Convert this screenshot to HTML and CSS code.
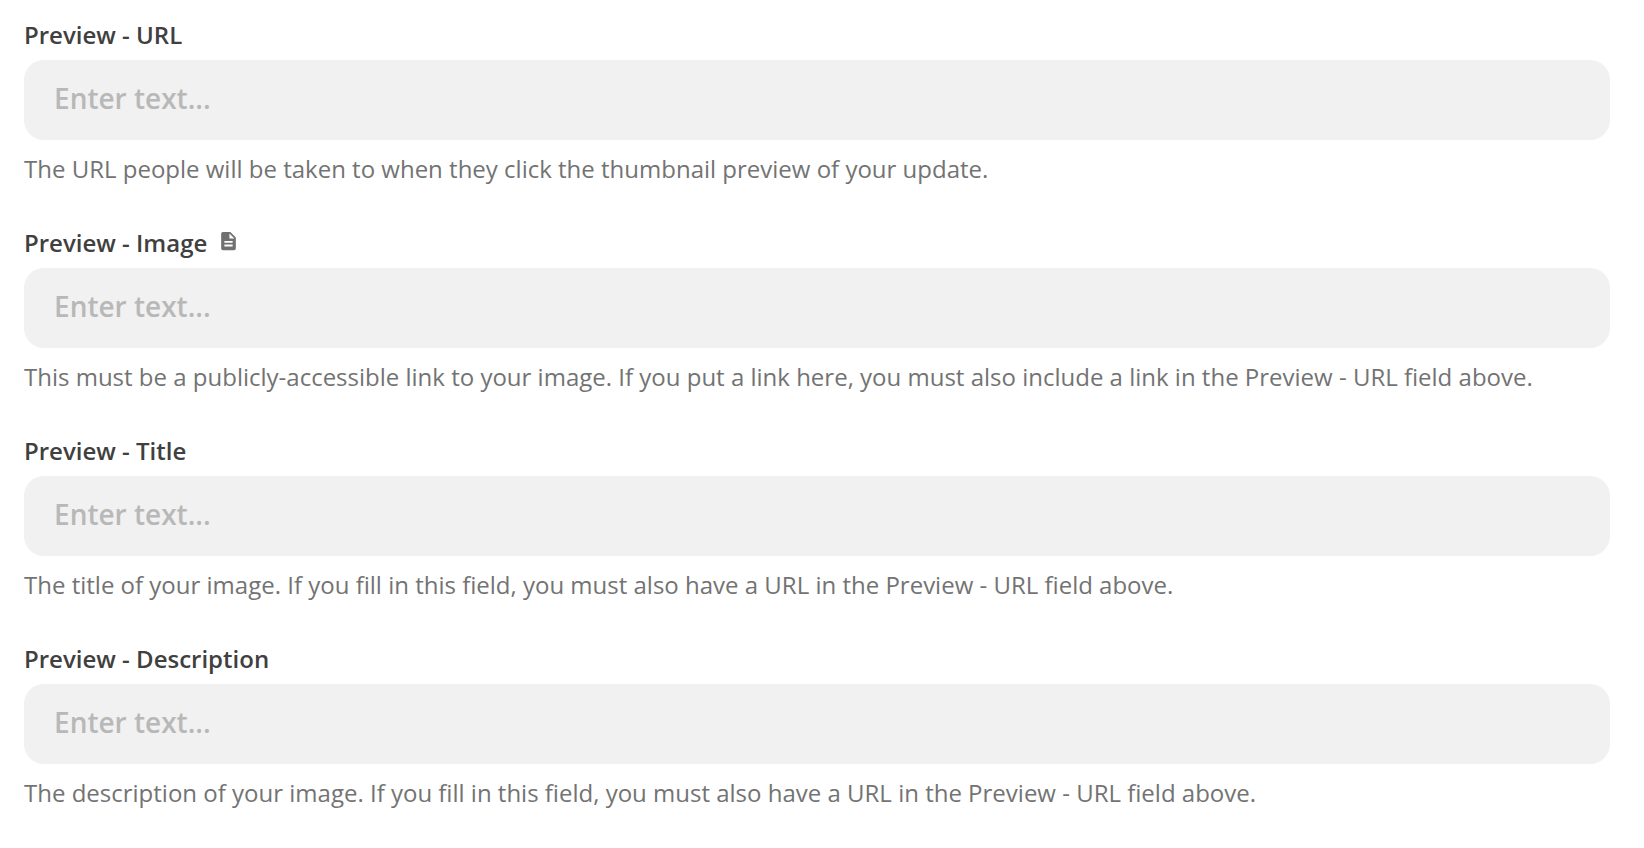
FILE: index.html
```html
<!DOCTYPE html>
<html lang="en">
<head>
    <meta charset="UTF-8">
    <meta name="viewport" content="width=device-width, initial-scale=1.0">
    <title>Preview fields</title>
    <link rel="stylesheet" href="styles.css">
</head>
<body>
    <form class="fields">
        <div class="field">
            <label for="preview-url">Preview - URL</label>
            <input type="text" id="preview-url" placeholder="Enter text..." aria-describedby="url-help">
            <p class="help" id="url-help">The URL people will be taken to when they click the thumbnail preview of your update.</p>
        </div>
        <div class="field">
            <label for="preview-image">Preview - Image
                <svg class="file-icon" viewBox="0 0 16 24" aria-hidden="true">
                    <path fill-rule="evenodd" d="M2 0h8l6 6v12a2 2 0 0 1-2 2H2a2 2 0 0 1-2-2V2a2 2 0 0 1 2-2zM9 1.500V7h5.500zM3.500 9.700v2h9v-2zM3.500 13.700v2h9v-2z"/>
                </svg>
            </label>
            <input type="text" id="preview-image" placeholder="Enter text..." aria-describedby="image-help">
            <p class="help" id="image-help">This must be a publicly-accessible link to your image. If you put a link here, you must also include a link in the Preview - URL field above.</p>
        </div>
        <div class="field">
            <label for="preview-title">Preview - Title</label>
            <input type="text" id="preview-title" placeholder="Enter text..." aria-describedby="title-help">
            <p class="help" id="title-help">The title of your image. If you fill in this field, you must also have a URL in the Preview - URL field above.</p>
        </div>
        <div class="field">
            <label for="preview-description">Preview - Description</label>
            <input type="text" id="preview-description" placeholder="Enter text..." aria-describedby="description-help">
            <p class="help" id="description-help">The description of your image. If you fill in this field, you must also have a URL in the Preview - URL field above.</p>
        </div>
    </form>
</body>
</html>
```

FILE: styles.css
```css
body {
    margin: 0;
    background: #fff;
    font-family: "Open Sans", sans-serif;
    font-size: 24px;
    color: #404040;
}
.fields {
    display: flex;
    flex-direction: column;
    gap: 40px;
    padding: 18px 34px 24px 24px;
}
.field {
    display: flex;
    flex-direction: column;
}
label {
    display: flex;
    align-items: center;
    gap: 14px;
    margin-bottom: 8px;
    line-height: 34px;
    font-weight: 600;
}
.file-icon {
    width: 15px;
    height: 22px;
    fill: #707070;
}
input {
    box-sizing: border-box;
    width: 100%;
    height: 80px;
    padding: 0 30px 4px;
    border: none;
    border-radius: 20px;
    background: #f1f1f1;
    color: #404040;
    font-family: inherit;
    font-size: 28px;
    font-weight: 600;
}
input::placeholder {
    color: #b8b8b8;
    opacity: 1;
}
.help {
    margin: 12px 0 0;
    line-height: 34px;
    color: #737373;
}
```
